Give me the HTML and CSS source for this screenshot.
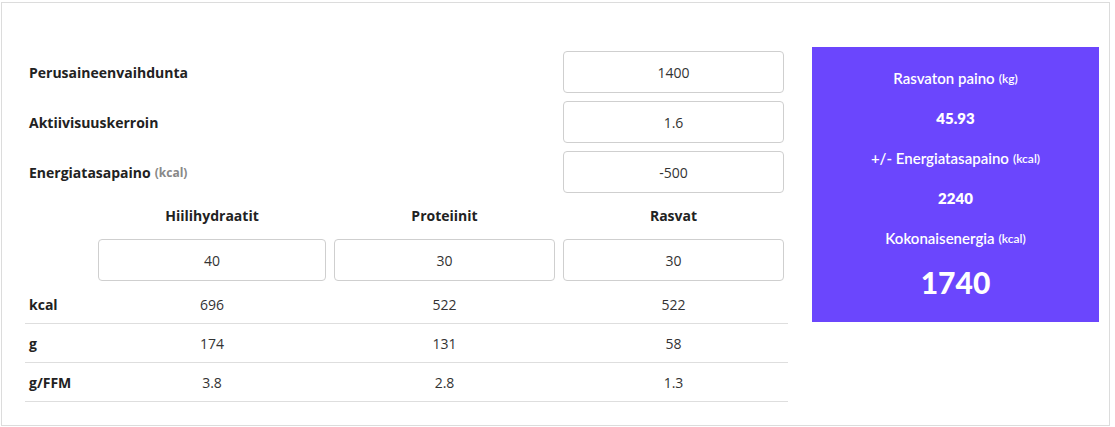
FILE: index.html
```html
<!DOCTYPE html>
<html lang="fi">
<head>
<meta charset="utf-8">
<title>Laskuri</title>
<link rel="stylesheet" href="styles.css">
</head>
<body>
<div class="frame">
  <div class="content">
    <div class="calc">
      <div class="label span3">Perusaineenvaihdunta</div>
      <div class="cell"><div class="input">1400</div></div>

      <div class="label span3">Aktiivisuuskerroin</div>
      <div class="cell"><div class="input">1.6</div></div>

      <div class="label span3">Energiatasapaino <span class="unit">(kcal)</span></div>
      <div class="cell"><div class="input">-500</div></div>

      <div class="head"></div>
      <div class="head">Hiilihydraatit</div>
      <div class="head">Proteiinit</div>
      <div class="head">Rasvat</div>

      <div class="cell"></div>
      <div class="cell"><div class="input">40</div></div>
      <div class="cell"><div class="input">30</div></div>
      <div class="cell"><div class="input">30</div></div>

      <div class="rlabel line">kcal</div>
      <div class="val line">696</div>
      <div class="val line">522</div>
      <div class="val line">522</div>

      <div class="rlabel line">g</div>
      <div class="val line">174</div>
      <div class="val line">131</div>
      <div class="val line">58</div>

      <div class="rlabel line">g/FFM</div>
      <div class="val line">3.8</div>
      <div class="val line">2.8</div>
      <div class="val line">1.3</div>
    </div>

    <div class="panel">
      <div class="pline">Rasvaton paino <span class="punit">(kg)</span></div>
      <div class="pline pnum">45.93</div>
      <div class="pline">+/- Energiatasapaino <span class="punit">(kcal)</span></div>
      <div class="pline pnum">2240</div>
      <div class="pline">Kokonaisenergia <span class="punit">(kcal)</span></div>
      <div class="pbig">1740</div>
    </div>
  </div>
</div>
</body>
</html>
```

FILE: styles.css
```css
html, body {
  margin: 0;
  padding: 0;
  background: #fff;
}
body {
  font-family: "Open Sans", "Liberation Sans", sans-serif;
  color: #333;
  font-size: 14px;
}
.frame {
  box-sizing: border-box;
  margin: 2px 0 0 1px;
  width: 1109px;
  height: 424px;
  border: 1px solid #dcdcdc;
  padding: 44px 0 0 23px;
}
.content {
  display: flex;
  align-items: flex-start;
  gap: 24px;
}
.calc {
  display: grid;
  grid-template-columns: 69px 236px 229px 229px;
  width: 763px;
}
.label {
  grid-column: 1 / span 3;
  display: flex;
  align-items: center;
  padding-left: 4px;
  font-weight: 700;
  color: #222;
  height: 50px;
}
.unit {
  font-size: 12px;
  color: #888;
  margin-left: 4px;
}
.cell {
  box-sizing: border-box;
  padding: 4px;
  height: 50px;
}
.input {
  box-sizing: border-box;
  height: 42px;
  border: 1px solid #cfcfcf;
  border-radius: 4px;
  display: flex;
  align-items: center;
  justify-content: center;
  color: #333;
  background: #fff;
}
.head {
  box-sizing: border-box;
  height: 38px;
  padding-bottom: 2px;
  display: flex;
  align-items: center;
  justify-content: center;
  font-weight: 700;
  color: #222;
}
.rlabel {
  display: flex;
  align-items: center;
  padding-left: 4px;
  font-weight: 700;
  color: #222;
}
.val {
  display: flex;
  align-items: center;
  justify-content: center;
  color: #333;
}
.line {
  height: 38px;
  border-bottom: 1px solid #dedede;
}
.panel {
  box-sizing: border-box;
  width: 287px;
  height: 275px;
  background: #6b46fd;
  color: #fff;
  font-family: Lato, "Open Sans", sans-serif;
  padding-top: 11px;
  display: flex;
  flex-direction: column;
  align-items: center;
}
.pline {
  height: 40px;
  display: flex;
  align-items: center;
  justify-content: center;
  font-size: 15px;
  font-weight: 600;
}
.punit {
  font-size: 12px;
  margin-left: 4px;
}
.pnum {
  font-weight: 800;
  font-size: 15px;
}
.pbig {
  height: 48px;
  display: flex;
  align-items: center;
  font-size: 30px;
  font-weight: 900;
}
```
